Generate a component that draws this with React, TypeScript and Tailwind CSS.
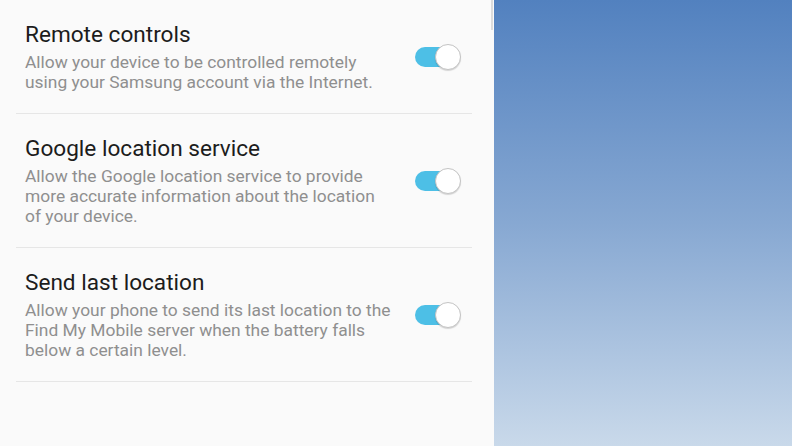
import React from 'react';

type Setting = {
  title: string;
  lines: string[];
};

const settings: Setting[] = [
  {
    title: 'Remote controls',
    lines: ['Allow your device to be controlled remotely', 'using your Samsung account via the Internet.'],
  },
  {
    title: 'Google location service',
    lines: [
      'Allow the Google location service to provide',
      'more accurate information about the location',
      'of your device.',
    ],
  },
  {
    title: 'Send last location',
    lines: [
      'Allow your phone to send its last location to the',
      'Find My Mobile server when the battery falls',
      'below a certain level.',
    ],
  },
];

const Toggle: React.FC = () => (
  <div className="relative w-[46px] h-[26px] flex items-center shrink-0">
    <div className="w-[44px] h-[20px] rounded-full bg-[#4dbfe6]" />
    <div className="absolute right-0 top-0 w-[26px] h-[26px] rounded-full bg-white border border-[#c4c4c4] shadow-[0_1px_1px_rgba(0,0,0,0.15)]" />
  </div>
);

const App: React.FC = () => {
  return (
    <div className="flex w-[792px] h-[446px] overflow-hidden" style={{ fontFamily: 'Roboto, "Noto Sans", sans-serif' }}>
      <div className="relative w-[494px] h-full bg-[#fafafa] flex flex-col">
        <div className="absolute right-[1px] top-0 w-[2px] h-[30px] bg-[#dcdcdc]" />
        {settings.map((s) => (
          <div key={s.title} className="flex flex-col">
            <div className="flex items-center pl-[25px] pr-[33px] pt-[21px] pb-[21px]">
              <div className="flex-1">
                <div className="text-[22.6px] leading-[28px] text-[#1c1c1c]">{s.title}</div>
                <div className="mt-[3px] text-[17.4px] leading-[20px] text-[#8f8f8f]">
                  {s.lines.map((l) => (
                    <div key={l} className="whitespace-nowrap">{l}</div>
                  ))}
                </div>
              </div>
              <Toggle />
            </div>
            <div className="ml-[16px] mr-[22px] h-px bg-[#e6e6e6]" />
          </div>
        ))}
      </div>
      <div className="flex-1 h-full bg-gradient-to-b from-[#5281bf] via-[#87a8d2] to-[#c9d9ea]" />
    </div>
  );
};

export default App;
